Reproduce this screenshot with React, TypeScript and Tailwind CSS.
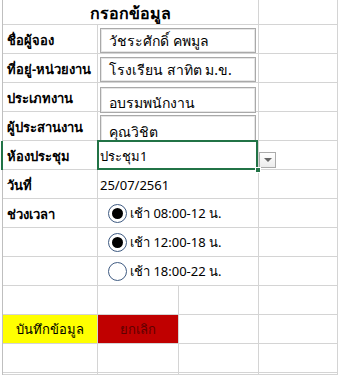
import type { ReactNode } from "react"

const grid = "border-r border-b border-[#d4d4d4]"

const Cell = ({ className = "", children }: { className?: string; children?: ReactNode }) => (
  <div className={`${grid} ${className}`}>{children}</div>
)

const Label = ({ children }: { children: ReactNode }) => (
  <Cell className="col-start-2 flex items-center pl-[4px] pt-[3px] text-[13px] font-bold text-black">{children}</Cell>
)

const TextBox = ({ value, className = "" }: { value: string; className?: string }) => (
  <Cell className="col-span-2 relative">
    <div
      className={`absolute left-[2px] right-[2px] z-10 flex items-center overflow-hidden border border-[#a9a9a9] bg-white pl-[8px] text-[14px] text-black shadow-[inset_0_0_0_1px_#e6e6e6] ${className}`}
    >
      {value}
    </div>
  </Cell>
)

const Radio = ({ checked, label }: { checked: boolean; label: string }) => (
  <Cell className="col-span-2 flex items-center pl-[10px] pt-px">
    <span className="flex size-[19px] items-center justify-center rounded-full border-[1.5px] border-[#3f5b82] bg-white">
      {checked && <span className="size-[11px] rounded-full bg-black" />}
    </span>
    <span className="ml-[3px] text-[13px] text-black">{label}</span>
  </Cell>
)

export default function App() {
  return (
    <div className="grid h-[375px] w-[338px] grid-cols-[3px_95px_81px_80px_1fr] grid-rows-[25px_repeat(12,29px)_1fr] overflow-hidden bg-white font-['Noto_Sans',Tahoma,sans-serif]">
      <div className="row-span-14 flex flex-col">
        <div className="h-[141px] border-r border-[#bfbfbf]" />
        <div className="h-[29px] border-r-2 border-[#217346]" />
        <div className="flex-1 border-r border-[#bfbfbf]" />
      </div>

      {/* title */}
      <Cell className="col-span-3 flex items-center justify-center pt-[2px] text-[16px] font-bold text-black">กรอกข้อมูล</Cell>
      <Cell />

      <Label>ชื่อผู้จอง</Label>
      <TextBox value="วัชระศักดิ์ คพมูล" className="top-[3px] h-[25px]" />
      <Cell />

      <Label>ที่อยู่-หน่วยงาน</Label>
      <TextBox value="โรงเรียน สาทิต ม.ข." className="top-[3px] h-[25px]" />
      <Cell />

      <Label>ประเภทงาน</Label>
      <TextBox value="อบรมพนักงาน" className="top-[4px] h-[26px] pt-[4px]" />
      <Cell />

      <Label>ผู้ประสานงาน</Label>
      <TextBox value="คุณวิชิต" className="top-[3px] h-[27px] pt-[6px]" />
      <Cell />

      <Label>ห้องประชุม</Label>
      <Cell className="col-span-2 relative flex items-center pl-[2px] pt-[3px] text-[13px] text-black">
        <div className="absolute -top-px -left-px right-0 -bottom-px z-20 border-2 border-[#217346]" />
        <div className="absolute -right-[3px] -bottom-[4px] z-30 size-[6px] border border-white bg-[#217346]" />
        ประชุม1
      </Cell>
      <Cell className="flex items-end pb-px">
        <div className="flex h-[16px] w-[17px] items-center justify-center border border-[#ababab] bg-gradient-to-b from-white to-[#ececec]">
          <div className="h-0 w-0 border-x-[4px] border-t-[4px] border-x-transparent border-t-[#666]" />
        </div>
      </Cell>

      <Label>วันที่</Label>
      <Cell className="col-span-2 flex items-center pl-[2px] pt-[3px] text-[13px] text-black">25/07/2561</Cell>
      <Cell />

      <Label>ช่วงเวลา</Label>
      <Radio checked label="เช้า 08:00-12 น." />
      <Cell />

      <Cell className="col-start-2" />
      <Radio checked label="เช้า 12:00-18 น." />
      <Cell />

      <Cell className="col-start-2" />
      <Radio checked={false} label="เช้า 18:00-22 น." />
      <Cell />

      <Cell className="col-start-2" />
      <Cell />
      <Cell />
      <Cell />

      <Cell className="col-start-2 flex items-center justify-center bg-[#ffff00] pt-[2px] text-[13px] text-black">บันทึกข้อมูล</Cell>
      <Cell className="flex items-center justify-center bg-[#c00000] pt-[2px] text-[13px] text-[#5e0000]">ยกเลิก</Cell>
      <Cell />
      <Cell />

      <Cell className="col-start-2" />
      <Cell />
      <Cell />
      <Cell />

      <Cell className="col-start-2" />
      <Cell />
      <Cell />
      <Cell />
    </div>
  )
}
